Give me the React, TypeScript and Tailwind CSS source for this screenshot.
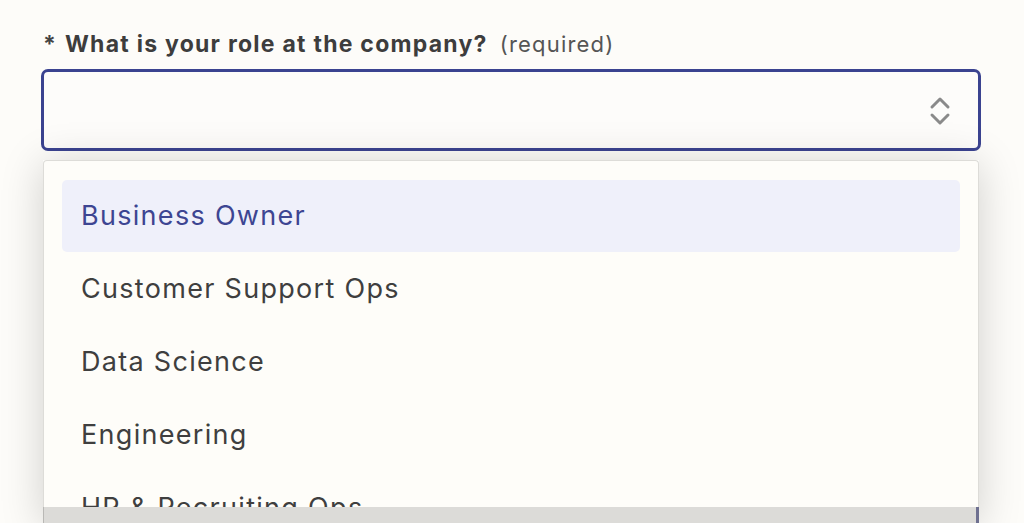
import React from "react";

const items = [
  "Business Owner",
  "Customer Support Ops",
  "Data Science",
  "Engineering",
  "HR & Recruiting Ops",
  "IT",
];

export default function App() {
  return (
    <div
      className="w-[1024px] h-[523px] overflow-hidden bg-[#fdfcf9] text-[#3a3a3a]"
      style={{ fontFamily: "Inter, 'Noto Sans', sans-serif" }}
    >
      <div className="pl-[41px] pt-[27px] w-[984px] flex flex-col">
        <div className="flex items-baseline h-[30px] pl-[2px]">
          <span className="text-[23px] font-bold text-[#444] w-[22px]">*</span>
          <span className="text-[23px] font-bold text-[#3d3d3d] tracking-[1.25px]">
            What is your role at the company?
          </span>
          <span className="ml-[12px] text-[22px] text-[#555] tracking-[1.2px]">(required)</span>
        </div>
        <div className="mt-[12px] h-[82px] w-[940px] rounded-[7px] border-[3px] border-[#3b4390] bg-[#fdfcfa] flex items-center justify-end pr-[27px]">
          <svg width="22" height="32" viewBox="0 0 22 32" fill="none" className="mt-[1px]">
            <path d="M3 12 L11 4 L19 12" stroke="#8a8a8a" strokeWidth="3" strokeLinecap="round" strokeLinejoin="round" />
            <path d="M3 20 L11 28 L19 20" stroke="#8a8a8a" strokeWidth="3" strokeLinecap="round" strokeLinejoin="round" />
          </svg>
        </div>
        <div className="mt-[9px] ml-[2px] w-[936px] flex flex-col shadow-[0_4px_40px_rgba(0,0,0,0.18)]">
          <div className="h-[347px] overflow-hidden rounded-t-[4px] border border-b-0 border-[#dddcd8] bg-[#fefdf9] pt-[19px] px-[18px]">
            <div className="flex flex-col gap-px">
              {items.map((it, i) => (
                <div
                  key={it}
                  className={
                    i === 0
                      ? "h-[72px] shrink-0 rounded-[5px] bg-[#eff0fa] text-[#3d4592] flex items-center pl-[19px] text-[27px] tracking-[1.3px]"
                      : "h-[72px] shrink-0 flex items-center pl-[19px] text-[27px] tracking-[1.3px] text-[#3f3f3f]"
                  }
                >
                  {it}
                </div>
              ))}
            </div>
          </div>
          <div className="h-[16px] bg-[#dcdbd8] border-l border-l-[#b9b8b5] border-r-[3px] border-r-[#6e7090]" />
        </div>
      </div>
    </div>
  );
}
